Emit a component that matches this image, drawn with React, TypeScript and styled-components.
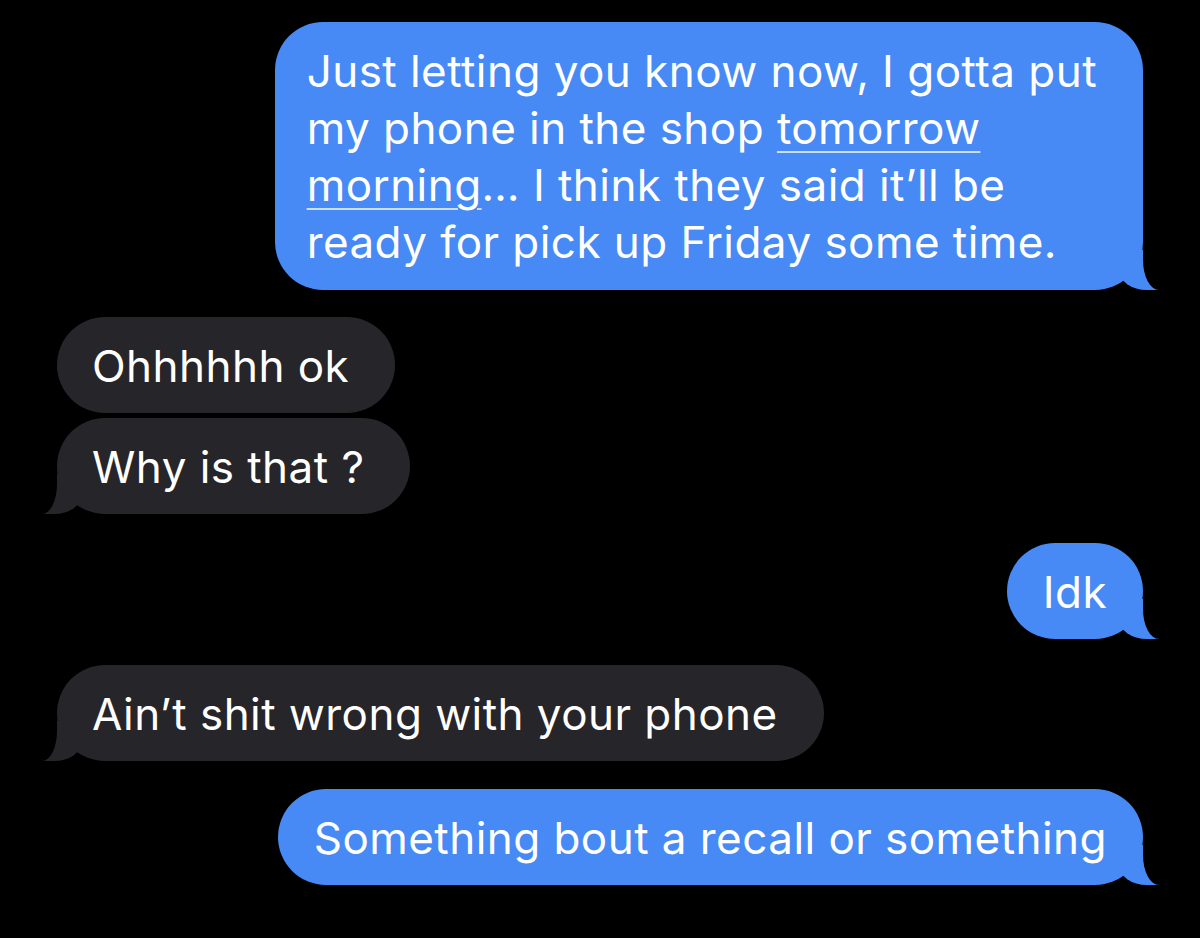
import React from "react";
import styled, { createGlobalStyle, css } from "styled-components";

const BLUE = "#478af5";
const GRAY = "#262529";

const Global = createGlobalStyle`
  html, body { margin: 0; padding: 0; background: #000; }
  body { font-family: Inter, "Noto Sans", sans-serif; -webkit-font-smoothing: antialiased; }
`;

const Thread = styled.div`
  width: 1200px;
  height: 938px;
  background: #000;
  display: flex;
  flex-direction: column;
  padding: 22px 57px 0 57px;
  box-sizing: border-box;
  overflow: hidden;
`;

const Row = styled.div<{ $mine?: boolean; $gap: number }>`
  display: flex;
  justify-content: ${(p) => (p.$mine ? "flex-end" : "flex-start")};
  margin-top: ${(p) => p.$gap}px;
`;

const Bubble = styled.div<{ $mine?: boolean; $tail?: boolean; $wide?: boolean }>`
  position: relative;
  z-index: 0;
  background: ${(p) => (p.$mine ? BLUE : GRAY)};
  color: #fff;
  font-size: 44px;
  line-height: 57px;
  letter-spacing: 0.45px;
  padding: 21px ${(p) => (p.$mine ? (p.$wide ? "46px 19px 32px" : "36px 18px 36px") : "46px 18px 35px")};
  border-radius: 48px;
  white-space: nowrap;

  ${(p) =>
    p.$tail &&
    (p.$mine
      ? css`
          &::before {
            content: "";
            position: absolute;
            z-index: -1;
            bottom: 0;
            right: -16px;
            width: 40px;
            height: 40px;
            background: ${BLUE};
            border-bottom-left-radius: 28px 20px;
          }
          &::after {
            content: "";
            position: absolute;
            z-index: -1;
            bottom: 0;
            left: 100%;
            width: 30px;
            height: 42px;
            background: #000;
            border-bottom-left-radius: 16px 30px;
          }
        `
      : css`
          &::before {
            content: "";
            position: absolute;
            z-index: -1;
            bottom: 0;
            left: -15px;
            width: 40px;
            height: 40px;
            background: ${GRAY};
            border-bottom-right-radius: 28px 20px;
          }
          &::after {
            content: "";
            position: absolute;
            z-index: -1;
            bottom: 0;
            right: 100%;
            width: 30px;
            height: 42px;
            background: #000;
            border-bottom-right-radius: 15px 30px;
          }
        `)}
`;

const Line = styled.span`
  display: block;
`;

const Link = styled.span`
  text-decoration: underline;
  text-decoration-color: rgba(255, 255, 255, 0.72);
  text-decoration-thickness: 2px;
  text-underline-offset: 7px;
`;

export default function App() {
  return (
    <>
      <Global />
      <Thread>
        <Row $mine $gap={0}>
          <Bubble $mine $tail $wide>
            <Line>Just letting you know now, I gotta put</Line>
            <Line>
              my phone in the shop <Link>tomorrow</Link>
            </Line>
            <Line>
              <Link>morning</Link>… I think they said it’ll be
            </Line>
            <Line>ready for pick up Friday some time.</Line>
          </Bubble>
        </Row>
        <Row $gap={27}>
          <Bubble>Ohhhhhh ok</Bubble>
        </Row>
        <Row $gap={5}>
          <Bubble $tail>Why is that ?</Bubble>
        </Row>
        <Row $mine $gap={29}>
          <Bubble $mine $tail>Idk</Bubble>
        </Row>
        <Row $gap={26}>
          <Bubble $tail>Ain’t shit wrong with your phone</Bubble>
        </Row>
        <Row $mine $gap={28}>
          <Bubble $mine $tail>Something bout a recall or something</Bubble>
        </Row>
      </Thread>
    </>
  );
}
